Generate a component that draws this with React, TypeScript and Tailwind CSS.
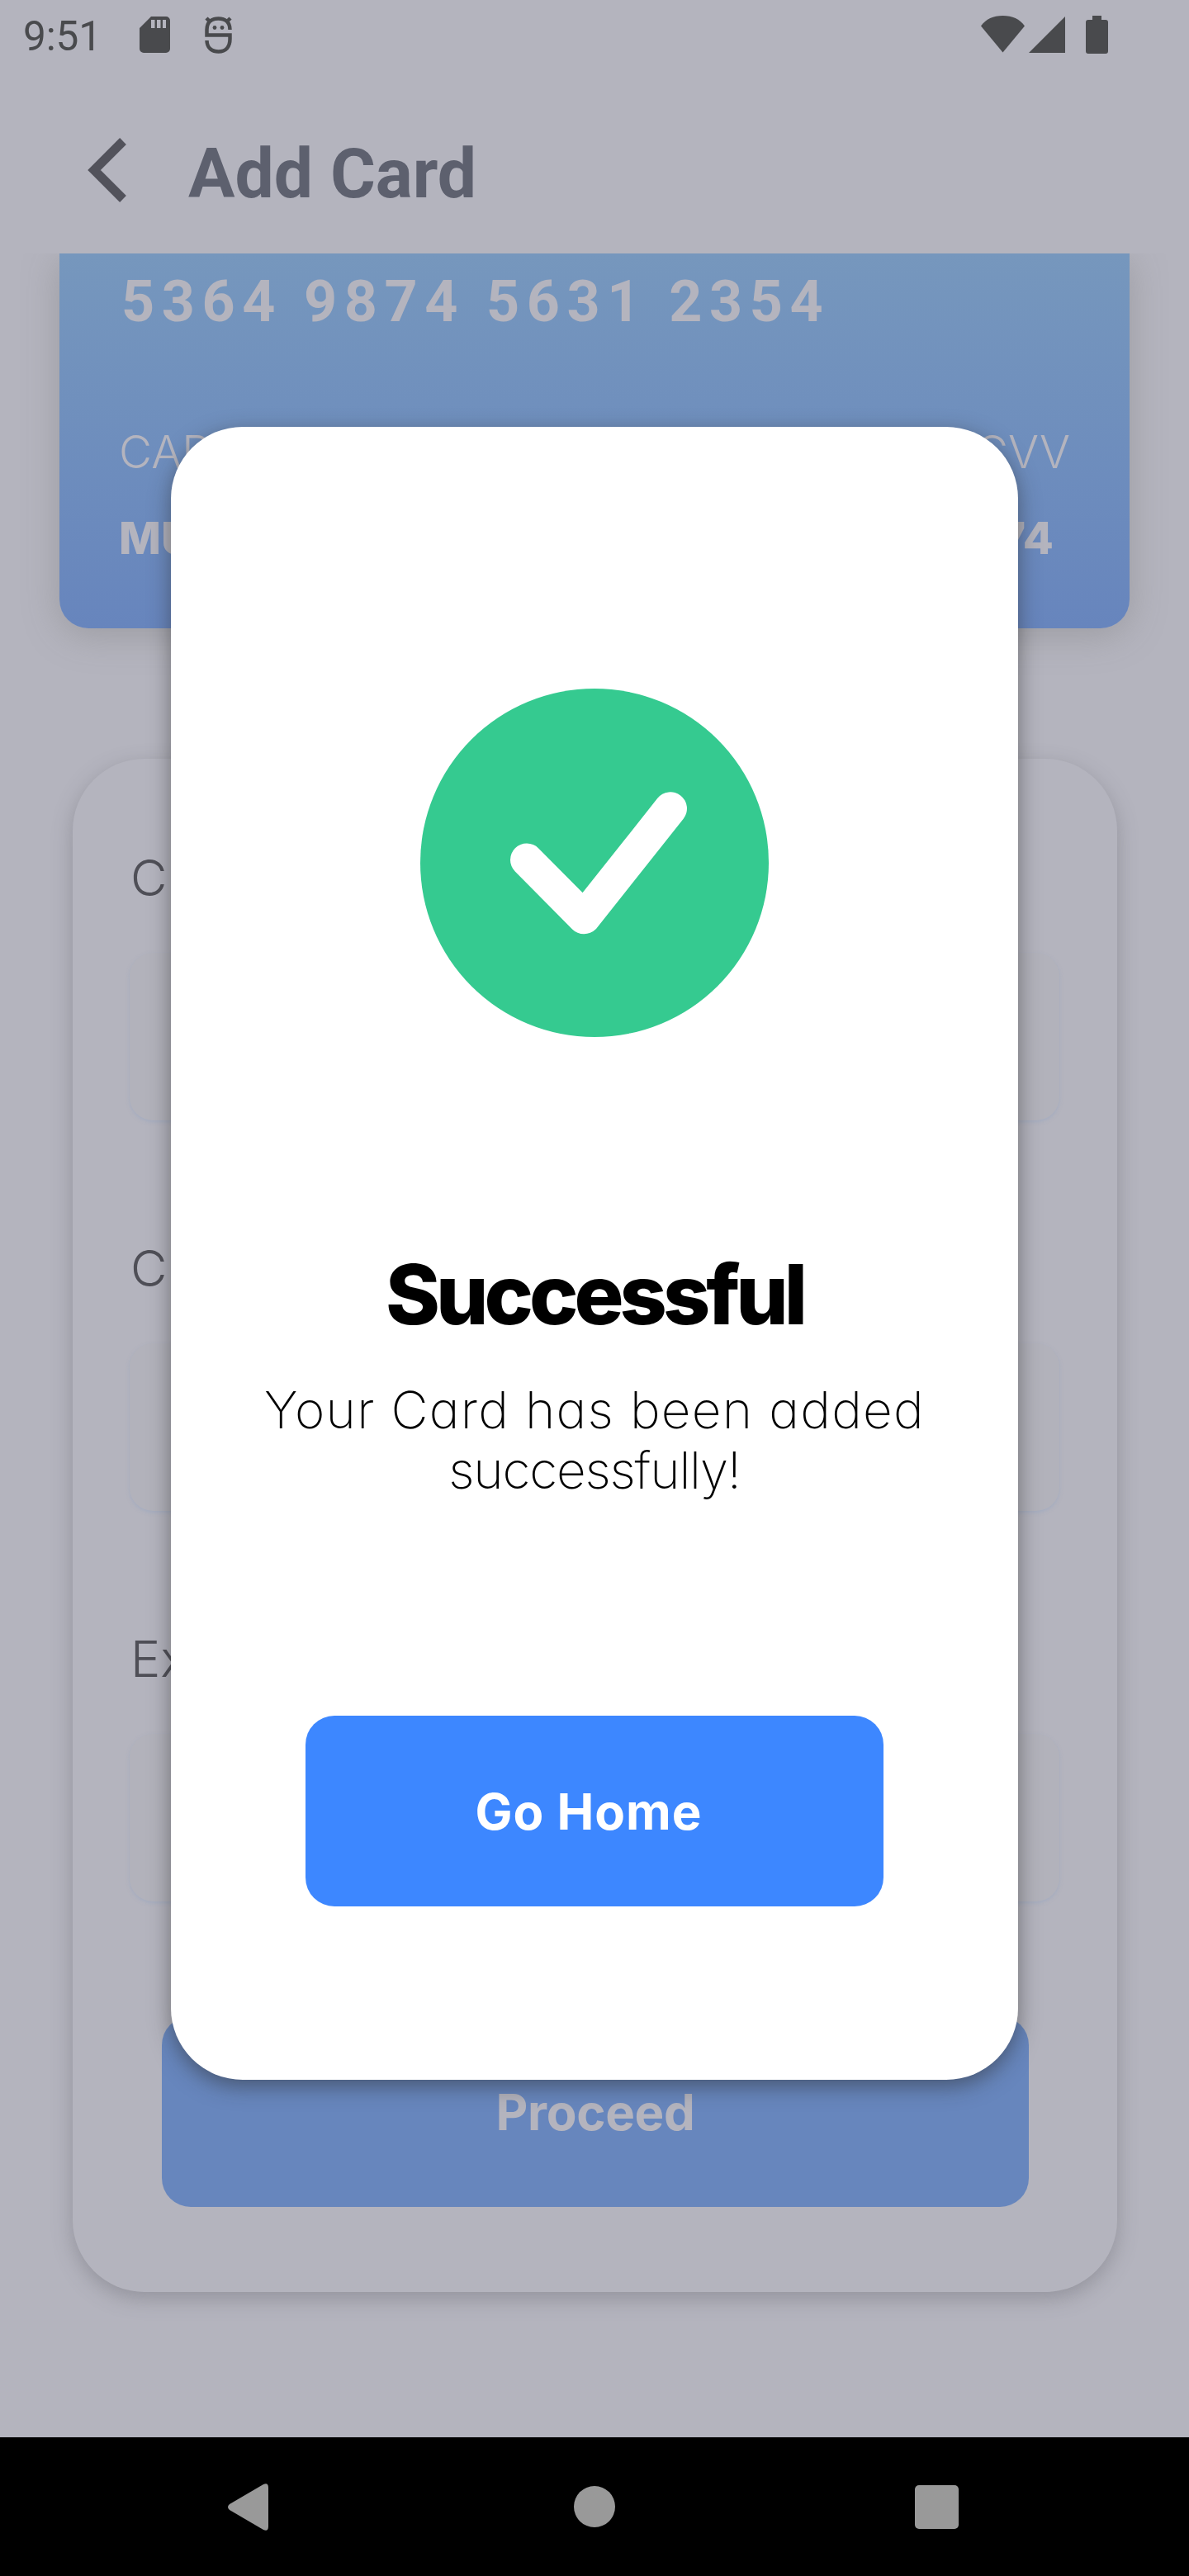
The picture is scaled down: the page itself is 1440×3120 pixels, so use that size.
import React from "react";

const GEO = "font-['Inter','Lato',sans-serif] [font-feature-settings:'cv11']";

function StatusBar() {
  return (
    <div className="flex h-[88px] shrink-0 items-start justify-between pl-[28px] pr-[98px] pt-[19px] text-[#494a4d]">
      <div className="flex items-start">
        <span className="w-[141px] font-['Roboto',sans-serif] text-[49.5px] leading-[50px] tracking-[-0.1px]">9:51</span>
        <svg className="h-[46px] w-[37px]" viewBox="0 0 37 46" fill="currentColor">
          <path fillRule="evenodd" d="M14 1H32a5 5 0 0 1 5 5V40a5 5 0 0 1-5 5H5a5 5 0 0 1-5-5V15ZM14 5v10h4.500V5Zm7 0v10h4.500V5Zm7 0v10h4V5Z" />
        </svg>
        <svg className="ml-[42px] h-[46px] w-[33px]" viewBox="0 0 33 46" fill="none" stroke="currentColor" strokeWidth="4.5">
          <path d="M30.500 17C30.500 8 25 3.500 16.500 3.500S2.500 8 2.500 17v6.500h28V28c0 10-5 15.500-14 15.500S2.700 38 2.500 30" />
          <path d="M2 3l5 5M31 3l-5 5" />
          <circle cx="12" cy="14.500" r="2.400" fill="currentColor" stroke="none" />
          <circle cx="21" cy="14.500" r="2.400" fill="currentColor" stroke="none" />
        </svg>
      </div>
      <div className="flex items-start">
        <svg className="h-[46px] w-[53px]" viewBox="0 0 53 46" fill="currentColor"><path d="M0 12.500C6 4 15 0 26.500 0S47 4 53 12.500L26.500 44.500Z" /></svg>
        <svg className="ml-[5px] h-[46px] w-[44px]" viewBox="0 0 44 46" fill="currentColor"><path d="M44 1V45H0Z" /></svg>
        <svg className="ml-[25px] h-[46px] w-[27px]" viewBox="0 0 27 46" fill="currentColor"><path d="M8 0H19V5H24a3 3 0 0 1 3 3V43a3 3 0 0 1-3 3H3a3 3 0 0 1-3-3V8a3 3 0 0 1 3-3H8Z" /></svg>
      </div>
    </div>
  );
}

function Field({ label, tracking }: { label: string; tracking: string }) {
  return (
    <div className="h-[473px]">
      <div className={`${GEO} ${tracking} h-[127px] pl-[1px] text-[61px] font-light leading-[72px] text-[#4f4f57]`}>{label}</div>
      <div className="h-[203px] rounded-[28px] bg-[#b2b2bb] shadow-[0_2px_4px_rgba(150,165,195,0.5)]" />
    </div>
  );
}

export default function App() {
  return (
    <div className="relative flex h-[3120px] w-[1440px] flex-col overflow-hidden bg-[#b4b4be]">
      <StatusBar />
      <header className="flex h-[219px] shrink-0 items-start pl-[106px] pt-[77px]">
        <svg className="mt-[2px] h-[78px] w-[48px]" viewBox="0 0 48 78" fill="none" stroke="#52525b" strokeWidth="11">
          <path d="M43 4L8 39L43 74" />
        </svg>
        <h1 className="ml-[74px] font-['Roboto',sans-serif] text-[84px] font-bold leading-[92px] text-[#5d606e]">Add Card</h1>
      </header>

      <main className="flex h-[2645px] shrink-0 flex-col overflow-hidden">
        <section className="mx-[72px] h-[454px] shrink-0 rounded-b-[35px] bg-linear-to-b from-[#7697bd] to-[#6785bd] px-[72px] text-[#b4b4be] shadow-[0_8px_44px_rgba(120,120,120,0.4)]">
          <div className="pl-[3px] pt-[18px] font-['Roboto',sans-serif] text-[70px] font-bold leading-[80px] tracking-[8.6px]">5364 9874 5631 2354</div>
          <div className={`${GEO} mt-[106px] flex justify-between text-[55px] font-light leading-[72px]`}>
            <span>CARD</span>
            <span>CVV</span>
          </div>
          <div className={`${GEO} mt-[33px] flex justify-between pr-[20px] text-[54px] font-extrabold leading-[72px]`}>
            <span>MU</span>
            <span>74</span>
          </div>
        </section>

        <section className="ml-[88px] mt-[158px] h-[1857px] w-[1265px] shrink-0 rounded-[87px] bg-[#b4b4be] pl-[69px] pr-[70px] pt-[108px] shadow-[0_8px_24px_rgba(85,85,95,0.35)]">
          <Field label="Card" tracking="tracking-[5px]" />
          <Field label="Card" tracking="tracking-[5px]" />
          <Field label="Expiry" tracking="tracking-[0px]" />
          <div className={`${GEO} ml-[39px] mt-[-4px] flex h-[231px] w-[1050px] items-center justify-center rounded-[35px] bg-[#6786bd] text-[60px] font-bold tracking-[-0.3px] text-[#b4b4be]`}>
            Proceed
          </div>
        </section>
      </main>

      <nav className="flex h-[168px] shrink-0 items-center bg-black">
        <svg className="ml-[276px] h-[57px] w-[49px]" viewBox="0 0 49 57" fill="#999"><path d="M43 1Q49-1.500 49 5V52Q49 58.500 43 56L2 32Q-2 28.500 2 25Z" /></svg>
        <span className="ml-[370px] size-[50px] rounded-full bg-[#999]" />
        <span className="ml-[363px] size-[53px] rounded-[5px] bg-[#999]" />
      </nav>

      <div role="dialog" className={`${GEO} absolute left-[207px] top-[517px] flex h-[2002px] w-[1026px] flex-col items-center rounded-[87px] bg-white shadow-[0_8px_26px_rgba(40,40,40,0.5)]`}>
        <svg className="mt-[317px] h-[422px] w-[422px]" viewBox="0 0 422 422">
          <circle cx="211" cy="211" r="211" fill="#35ca90" />
          <path d="M129 207.500L198.300 277.300L303 145.300" fill="none" stroke="#fff" strokeWidth="40" strokeLinecap="round" strokeLinejoin="round" />
        </svg>
        <h2 className="mt-[257px] text-[100px] font-extrabold leading-[110px] tracking-[-5px] text-black">Successful</h2>
        <p className="mt-[48px] flex flex-col items-center text-[62px] font-extralight leading-[73px] text-black">
          <span className="tracking-[1.3px]">Your Card has been added</span>
          <span className="tracking-[-1.2px]">successfully!</span>
        </p>
        <button className="mt-[261px] h-[231px] w-[700px] rounded-[35px] bg-[#3d87ff] pr-[14px] text-[60px] font-bold tracking-[1px] text-white">Go Home</button>
      </div>
    </div>
  );
}
